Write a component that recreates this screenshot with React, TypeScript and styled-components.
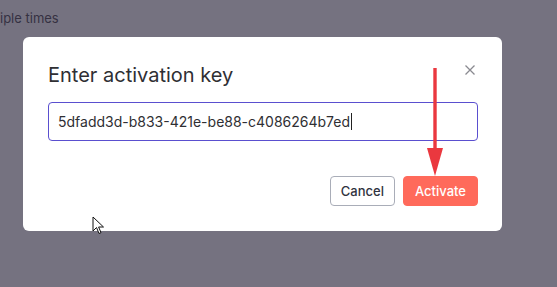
import React from "react";
import styled, { createGlobalStyle } from "styled-components";

const Global = createGlobalStyle`
  html, body { margin: 0; padding: 0; width: 557px; height: 287px; overflow: hidden; }
  body { font-family: Inter, "Noto Sans", sans-serif; background: #fff; }
`;

const Page = styled.div`
  position: relative;
  width: 557px;
  height: 287px;
  background: #fff;
`;

const BgText = styled.div`
  padding: 10px 0 0 0;
  font-size: 13px;
  color: #3a3740;
`;

const Overlay = styled.div`
  position: absolute;
  inset: 0;
  background: rgba(52, 47, 68, 0.68);
  padding: 37px 0 0 23px;
  box-sizing: border-box;
  display: flex;
  align-items: flex-start;
`;

const Modal = styled.div`
  position: relative;
  width: 479px;
  height: 194px;
  box-sizing: border-box;
  background: #fff;
  border-radius: 6px;
  padding: 25px 24px 0 25px;
  display: flex;
  flex-direction: column;
`;

const Title = styled.h2`
  margin: 0;
  font-size: 20px;
  font-weight: 400;
  line-height: 26px;
  color: #2f2f33;
`;

const Close = styled.button`
  position: absolute;
  top: 27px;
  right: 26px;
  width: 12px;
  height: 12px;
  padding: 0;
  border: none;
  background: none;
  display: flex;
`;

const KeyInput = styled.div`
  margin-top: 14px;
  height: 39px;
  box-sizing: border-box;
  border: 1px solid #5a4fcf;
  border-radius: 4px;
  padding: 0 9px;
  display: flex;
  align-items: center;
  font-size: 14px;
  color: #2f2f33;
`;

const Caret = styled.span`
  display: inline-block;
  width: 1px;
  height: 17px;
  background: #222;
  margin-left: 1px;
`;

const Footer = styled.div`
  margin-top: 35px;
  display: flex;
  justify-content: flex-end;
  gap: 8px;
`;

const Button = styled.button<{ $primary?: boolean }>`
  height: 30px;
  box-sizing: border-box;
  padding: 0 ${(p) => (p.$primary ? "11px" : "10px")};
  border-radius: 4px;
  font-family: Inter, "Noto Sans", sans-serif;
  font-size: 13px;
  font-weight: 500;
  border: 1px solid ${(p) => (p.$primary ? "#ff6a5b" : "#a9adb8")};
  background: ${(p) => (p.$primary ? "#ff6a5b" : "#fff")};
  color: ${(p) => (p.$primary ? "#fff" : "#2f3340")};
`;

const Arrow = styled.svg`
  position: absolute;
  left: 425px;
  top: 68px;
`;

const Cursor = styled.svg`
  position: absolute;
  left: 92px;
  top: 216px;
`;

export default function App() {
  return (
    <>
      <Global />
      <Page>
        <BgText>iple times</BgText>
        <Overlay>
          <Modal>
            <Title>Enter activation key</Title>
            <Close aria-label="close">
              <svg width="12" height="12" viewBox="0 0 12 12">
                <path d="M1.5 1.5 L10.5 10.5 M10.5 1.5 L1.5 10.5" stroke="#8a8a90" strokeWidth="1.3" fill="none" />
              </svg>
            </Close>
            <KeyInput>
              5dfadd3d-b833-421e-be88-c4086264b7ed<Caret />
            </KeyInput>
            <Footer>
              <Button>Cancel</Button>
              <Button $primary>Activate</Button>
            </Footer>
          </Modal>
        </Overlay>
        <Arrow width="20" height="110" viewBox="0 0 20 110">
          <rect x="8.3" y="0" width="3.4" height="84" fill="#ea383f" />
          <path d="M2 80 L18 80 L10 108 Z" fill="#ea383f" />
        </Arrow>
        <Cursor width="14" height="20" viewBox="0 0 14 20">
          <path d="M1 1 L1 15 L4.5 11.5 L7 17.5 L9 16.6 L6.6 11 L11.5 11 Z" fill="#fff" stroke="#111" strokeWidth="1" strokeLinejoin="round" />
        </Cursor>
      </Page>
    </>
  );
}
